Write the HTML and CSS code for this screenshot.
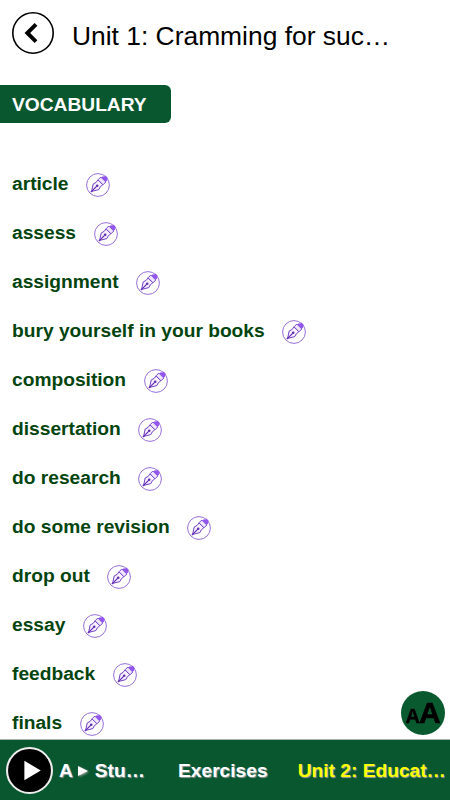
FILE: index.html
```html
<!DOCTYPE html>
<html lang="en">
<head>
  <meta charset="UTF-8">
  <meta name="viewport" content="width=device-width, initial-scale=1">
  <title>Unit 1: Cramming for success</title>
  <link rel="stylesheet" href="styles.css">
</head>
<body>

  <!-- pen icon used next to every word -->
  <svg class="sprite" aria-hidden="true">
    <symbol id="pen" viewBox="0 0 24 24">
      <circle cx="12" cy="12" r="11.4" fill="none" stroke="#8a60d2" stroke-width="0.9"/>
      <path d="M5.6 18.4L7.2 11Q10.6 9.8 12 7L16.8 11.8Q13.8 13.4 12.8 16.6Z" fill="#f6f0ff" stroke="#7040c0" stroke-width="1"/>
      <path d="M4.8 19.2L10.6 13.4" stroke="#5b20b0" stroke-width="1.1"/>
      <circle cx="11.2" cy="12.8" r="1.3" fill="#6331b0"/>
      <path d="M12 6.8L14.8 4L19.8 9L17 11.8Z" fill="#f0e7ff" stroke="#7745cf" stroke-width="1"/>
      <path d="M15.4 4.4L17 3L18 3.8L19.6 2.4L22 5.2L20.8 6.4L21.4 7.4L19.6 8.8Z" fill="#9255ed"/>
    </symbol>
  </svg>

  <header class="header">
    <button class="back" aria-label="Back">
      <svg viewBox="0 0 42 42">
        <circle cx="21" cy="21" r="20.2" fill="#fff" stroke="#000" stroke-width="1.6"/>
        <path d="M24 12.3L15.3 21L24 29.7" fill="none" stroke="#000" stroke-width="3.9"/>
      </svg>
    </button>
    <h1 class="title">Unit 1: Cramming for suc…</h1>
  </header>

  <main class="content">
    <h2 class="section">VOCABULARY</h2>
    <ul class="words">
      <li class="word">article <svg class="pen"><use href="#pen"/></svg></li>
      <li class="word">assess <svg class="pen"><use href="#pen"/></svg></li>
      <li class="word">assignment <svg class="pen"><use href="#pen"/></svg></li>
      <li class="word">bury yourself in your books <svg class="pen"><use href="#pen"/></svg></li>
      <li class="word">composition <svg class="pen"><use href="#pen"/></svg></li>
      <li class="word">dissertation <svg class="pen"><use href="#pen"/></svg></li>
      <li class="word">do research <svg class="pen"><use href="#pen"/></svg></li>
      <li class="word">do some revision <svg class="pen"><use href="#pen"/></svg></li>
      <li class="word">drop out <svg class="pen"><use href="#pen"/></svg></li>
      <li class="word">essay <svg class="pen"><use href="#pen"/></svg></li>
      <li class="word">feedback <svg class="pen"><use href="#pen"/></svg></li>
      <li class="word">finals <svg class="pen"><use href="#pen"/></svg></li>
    </ul>
  </main>

  <button class="font-size" aria-label="Text size">
    <span class="small-a">A</span><span class="big-a">A</span>
  </button>

  <nav class="footer">
    <button class="play" aria-label="Play">
      <svg viewBox="0 0 46 46">
        <circle cx="23" cy="23" r="22" fill="#000" stroke="#eee" stroke-width="2"/>
        <path d="M18 13.5L34 23L18 32.5Z" fill="#fff"/>
      </svg>
    </button>
    <a class="link prev">A <svg class="arrow" viewBox="0 0 10 10"><path d="M0 0L10 5L0 10Z" fill="#fff"/></svg> Stu…</a>
    <a class="link exercises">Exercises</a>
    <a class="link next">Unit 2: Educat…</a>
  </nav>

</body>
</html>
```
FILE: styles.css
```css
* {
  box-sizing: border-box;
}
body {
  margin: 0;
  height: 100vh;
  overflow: hidden;
  display: flex;
  flex-direction: column;
  background: #fff;
  font-family: "Liberation Sans", Arial, sans-serif;
}
button {
  padding: 0;
  border: none;
  background: none;
  font-family: inherit;
  cursor: pointer;
}
svg {
  display: block;
}
.sprite {
  position: absolute;
  width: 0;
  height: 0;
}

.header {
  display: flex;
  align-items: center;
  gap: 18px;
  height: 72px;
  padding: 0 12px 6px;
}
.back {
  width: 42px;
  height: 42px;
}
.title {
  margin: 7px 0 0;
  font-size: 26.4px;
  font-weight: normal;
  white-space: nowrap;
}

.content {
  flex: 1;
  min-height: 0;
  padding-top: 13px;
  overflow: hidden;
}
.section {
  width: 171px;
  height: 38px;
  margin: 0;
  padding-left: 12px;
  line-height: 39px;
  font-size: 19.2px;
  color: #fff;
  background: #08572f;
  border-radius: 0 6px 6px 0;
}
.words {
  margin: 36px 0 0;
  padding: 0 12px;
  list-style: none;
}
.word {
  display: flex;
  align-items: center;
  gap: 17.5px;
  height: 49px;
  font-size: 19.2px;
  font-weight: bold;
  color: #04440f;
}
.pen {
  width: 24px;
  height: 24px;
  margin-top: 3px;
}

.font-size {
  position: fixed;
  right: 5px;
  bottom: 65px;
  display: flex;
  align-items: baseline;
  justify-content: center;
  width: 44px;
  height: 44px;
  line-height: 44px;
  font-weight: bold;
  color: #000;
  background: #0a5a30;
  border-radius: 50%;
}
.small-a {
  font-size: 20px;
  -webkit-text-stroke: 0.5px #000;
}
.big-a {
  margin-left: -1px;
  font-size: 30px;
  -webkit-text-stroke: 0.6px #000;
}

.footer {
  display: flex;
  align-items: center;
  height: 61px;
  padding-left: 6px;
  background: #08572f;
  border-top: 1px solid #a9b5ae;
}
.play {
  width: 47px;
  height: 47px;
}
.link {
  margin-top: 2px;
  font-size: 19.2px;
  font-weight: bold;
  color: #fff;
  text-shadow: 1px 1px 1px #999;
  white-space: nowrap;
}
.prev {
  width: 90px;
  margin-left: 6px;
}
.arrow {
  display: inline-block;
  width: 10px;
  height: 10px;
  margin: 0 1px 1px;
  filter: drop-shadow(1px 1px 1px #999);
}
.exercises {
  margin-left: 29px;
}
.next {
  margin-left: 30px;
  color: #ff0;
}
```
